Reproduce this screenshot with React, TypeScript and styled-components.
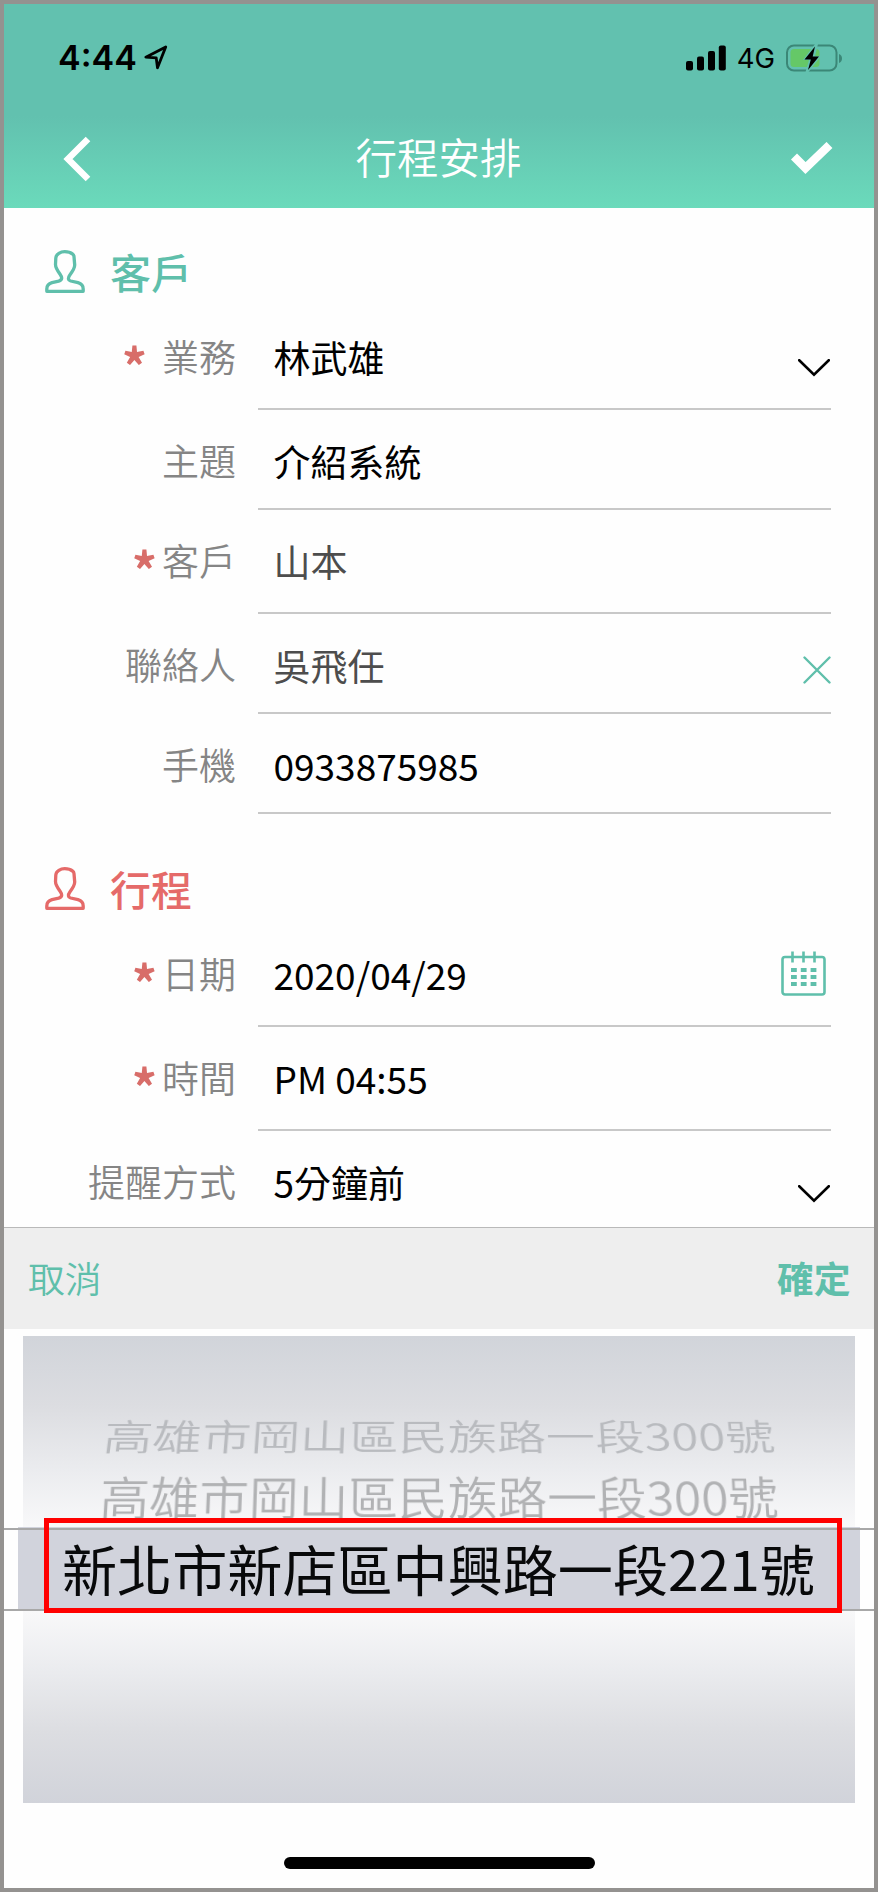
import React from "react";
import styled, { createGlobalStyle } from "styled-components";

const TEAL = "#5fbfab";
const CORAL = "#e56a69";

const GlobalStyle = createGlobalStyle`
  * { box-sizing: border-box; }
  body { margin: 0; background: #949290; }
`;

const Screen = styled.main`
  width: 878px;
  height: 1892px;
  border: 4px solid #949290;
  background: #fefefe;
  font-family: "Noto Sans CJK TC", sans-serif;
  font-size: 37px;
  line-height: 54px;
  color: #000;
  display: flex;
  flex-direction: column;
  overflow: hidden;
`;

const Header = styled.header`
  flex: none;
  height: 204px;
  background: linear-gradient(#62c1af 0, #62c1af 112px, #6bdabb 204px);
`;

const StatusBar = styled.div`
  height: 106px;
  padding: 1px 31px 0 54px;
  display: flex;
  align-items: center;
  font-family: Inter, sans-serif;
`;

const Clock = styled.span`
  font-size: 34px;
  font-weight: 600;
  margin-right: 7px;
`;

const Network = styled.span`
  font-size: 27.5px;
  margin: 0 11px 0 11px;
`;

const Spacer = styled.span`
  flex: 1;
`;

const TitleBar = styled.div`
  height: 98px;
  padding: 0 41px 0 59px;
  display: flex;
  align-items: center;
  justify-content: space-between;
`;

const Title = styled.h1`
  margin: 0 4px 7px 0;
  font-size: 41.5px;
  font-weight: 350;
  color: #fff;
`;

const Form = styled.div`
  flex: none;
  height: 1019px;
  overflow: hidden;
`;

const SectionTitle = styled.h2<{ $tone: string; $height: number }>`
  height: ${(p) => p.$height}px;
  margin: 0;
  padding: 0 0 12px 41px;
  display: flex;
  align-items: flex-end;
  gap: 25px;
  color: ${(p) => p.$tone};
  font-size: 41px;
  font-weight: 500;
  line-height: 46px;

  svg {
    margin-bottom: 1px;
  }
`;

const Row = styled.div<{ $height: number }>`
  height: ${(p) => p.$height}px;
  padding-right: 43px;
  display: flex;
`;

const Label = styled.div`
  width: 232px;
  margin-right: 22px;
  padding-top: 22.5px;
  display: flex;
  justify-content: flex-end;
  color: #858585;
  font-weight: 350;
`;

const Star = styled.span<{ $gap: number }>`
  margin-right: ${(p) => p.$gap}px;
  padding-top: 8px;
  font-size: 50px;
  font-weight: 700;
  color: #d86d69;
`;

const Field = styled.div<{ $muted?: boolean }>`
  flex: 1;
  padding: 24px 0 0 15.5px;
  border-bottom: 2px solid #c8c8c8;
  display: flex;
  justify-content: space-between;
  color: ${(p) => (p.$muted ? "#4d4d4d" : "#000")};
`;

const FieldIcon = styled.span<{ $top: number; $right: number }>`
  padding: ${(p) => p.$top}px ${(p) => p.$right}px 0 0;
  line-height: 0;
`;

const Sheet = styled.section`
  flex: none;
  height: 102px;
  padding: 0 23.5px 3px 24px;
  border-top: 1px solid #b9b9b9;
  background: #eee;
  display: flex;
  align-items: center;
  justify-content: space-between;
  color: ${TEAL};
`;

const SheetAction = styled.span<{ $strong?: boolean }>`
  font-size: 36.8px;
  font-weight: ${(p) => (p.$strong ? 700 : 350)};
`;

const Wheel = styled.section`
  position: relative;
  flex: none;
  height: 467px;
  margin-top: 7px;
`;

const WheelFace = styled.div`
  height: 467px;
  margin: 0 19px;
  padding-top: 72px;
  background: linear-gradient(#d1d4da 0, #dcdde1 70px, #ebecef 135px, #f8f8f9 190px, #f8f8f9 276px, #ebecef 332px, #dcdde1 397px, #d1d3da 467px);
  text-align: center;
  white-space: nowrap;
`;

const Option = styled.div<{ $angle: number; $height: number; $tone: string; $size: number }>`
  height: ${(p) => p.$height}px;
  line-height: ${(p) => p.$height}px;
  font-size: ${(p) => p.$size}px;
  font-weight: 350;
  color: ${(p) => p.$tone};
  transform: perspective(2400px) rotateX(${(p) => p.$angle}deg);
`;

const Band = styled.div`
  position: absolute;
  top: 191px;
  left: 0;
  right: 0;
  height: 84px;
  padding: 0 14px;
  display: flex;
`;

const BandFill = styled.div`
  flex: 1;
  background: #d1d3dc;
`;

const BandRules = styled.div`
  position: absolute;
  top: 192px;
  left: 0;
  right: 0;
  height: 83px;
  border: solid #a8a8a8;
  border-width: 2px 0;
`;

const Highlight = styled.div`
  position: absolute;
  top: 182px;
  left: 40px;
  width: 798px;
  height: 95px;
  border: 5px solid #f00;
  padding-left: 13px;
  line-height: 89px;
  font-size: 55.1px;
  white-space: nowrap;
  color: #08090a;
`;

const HomeArea = styled.footer`
  flex: 1;
  padding-top: 54px;
`;

const HomeBar = styled.div`
  width: 311px;
  height: 12px;
  margin: 0 auto;
  border-radius: 6px;
  background: #000;
`;

const LocationIcon = () => (
  <svg width="24" height="26" viewBox="0 0 24 26" fill="none">
    <path d="M1.8 12.2 21.7 2 13.5 22.7 12.2 12.8Z" stroke="#000" strokeWidth="2.8" strokeLinejoin="round" />
  </svg>
);

const SignalIcon = () => (
  <svg width="40" height="26" viewBox="0 0 40 26">
    <rect x="0" y="16" width="7" height="9.500" rx="2" />
    <rect x="11" y="11.500" width="7" height="14" rx="2" />
    <rect x="22" y="6" width="7" height="19.500" rx="2" />
    <rect x="32.800" y="0.500" width="7" height="25" rx="2" />
  </svg>
);

const BatteryIcon = () => (
  <svg width="57" height="28" viewBox="0 0 57 28">
    <rect x="1" y="1.500" width="49.500" height="25" rx="7" fill="none" stroke="#3b8777" strokeWidth="2" />
    <path d="M53 10c4 1 4 8 0 9z" fill="#3b8777" />
    <rect x="4.500" y="5" width="29" height="18" rx="3.500" fill="#65c867" />
    <path d="M29 0 17 16h6l-3.500 12h3L35 12h-6l3-12z" fill="#62c1af" />
    <path d="M29 2.500 18.500 15.500h6.300L22 26 33 12.500h-6.300z" fill="#000" />
  </svg>
);

const BackIcon = () => (
  <svg width="28" height="46" viewBox="0 0 28 46" fill="none">
    <path d="M25 3 5 23l20 20" stroke="#fff" strokeWidth="6.500" />
  </svg>
);

const DoneIcon = () => (
  <svg width="43" height="35" viewBox="0 0 43 35" fill="none">
    <path d="M4 14.500 15.500 26 39.500 3" stroke="#fff" strokeWidth="8.500" />
  </svg>
);

const PersonIcon = () => (
  <svg width="40" height="43" viewBox="0 0 40 43" fill="none" stroke="currentColor" strokeWidth="3.300" strokeLinejoin="round">
    <path d="M19.700 1.700c4 0 6 .8 8 2.400.8.600 1.200 1.500 1.300 2.500l.7 8.400c0 3.500-1.900 6-4.700 9.700-1.300 1.700-1.700 2.500-1.500 4.300.1 1.300.8 1.500 2.300 2l7.200 1.700c4 1.200 5.200 3.200 5.200 6.200v2.400H1.800v-2.400c0-3 1.200-5 5.200-6.200l6.700-1.500c2-.6 2.900-1.200 3-3 .1-1.600-.6-2.500-1.800-4.200-2.500-3.400-4.400-6-4.400-9.500L10.800 8c.3-4 4.900-6.300 8.900-6.300z" />
  </svg>
);

const ChevronIcon = () => (
  <svg width="32" height="18" viewBox="0 0 32 18" fill="none">
    <path d="m1.200 1.200 14.800 14.500L30.800 1.200" stroke="#000" strokeWidth="2.600" strokeLinecap="round" />
  </svg>
);

const ClearIcon = () => (
  <svg width="28" height="28" viewBox="0 0 28 28" fill="none">
    <path d="m1.500 1.500 25 25m0-25-25 25" stroke={TEAL} strokeWidth="2.400" strokeLinecap="round" />
  </svg>
);

const CalendarIcon = () => (
  <svg width="45" height="45" viewBox="0 0 45 45" fill="none" stroke={TEAL}>
    <rect x="1.500" y="6" width="42" height="37.500" rx="2.500" strokeWidth="2.600" />
    <path d="M11.500 0.500v11M22.500 0.500v11M33.500 0.500v11" strokeWidth="2.600" />
    <path d="M10 19h25.500M10 26h25.500M10 33h25.500" strokeWidth="4.200" strokeDasharray="5.800 4" />
  </svg>
);

type RowData = {
  label: string;
  value: string;
  height: number;
  starGap?: number;
  muted?: boolean;
  icon?: React.ReactNode;
  iconTop?: number;
  iconRight?: number;
};

const customerRows: RowData[] = [
  { label: "業務", value: "林武雄", height: 104, starGap: 15, icon: <ChevronIcon />, iconTop: 29, iconRight: 1 },
  { label: "主題", value: "介紹系統", height: 100 },
  { label: "客戶", value: "山本", height: 104, starGap: 5, muted: true },
  { label: "聯絡人", value: "吳飛任", height: 100, muted: true, icon: <ClearIcon />, iconTop: 18, iconRight: 0 },
  { label: "手機", value: "0933875985", height: 100 },
];

const tripRows: RowData[] = [
  { label: "日期", value: "2020/04/29", height: 104, starGap: 5, icon: <CalendarIcon />, iconTop: 4, iconRight: 5 },
  { label: "時間", value: "PM 04:55", height: 104, starGap: 5 },
  { label: "提醒方式", value: "5分鐘前", height: 104, icon: <ChevronIcon />, iconTop: 30, iconRight: 1 },
];

const FormRow = ({ label, value, height, starGap, muted, icon, iconTop = 0, iconRight = 0 }: RowData) => (
  <Row $height={height}>
    <Label>
      {starGap !== undefined && <Star $gap={starGap}>*</Star>}
      <span>{label}</span>
    </Label>
    <Field $muted={muted}>
      <span>{value}</span>
      {icon && <FieldIcon $top={iconTop} $right={iconRight}>{icon}</FieldIcon>}
    </Field>
  </Row>
);

export default function App() {
  return (
    <>
      <GlobalStyle />
      <Screen>
        <Header>
          <StatusBar>
            <Clock>4:44</Clock>
            <LocationIcon />
            <Spacer />
            <SignalIcon />
            <Network>4G</Network>
            <BatteryIcon />
          </StatusBar>
          <TitleBar>
            <BackIcon />
            <Title>行程安排</Title>
            <DoneIcon />
          </TitleBar>
        </Header>
        <Form>
          <SectionTitle $tone={TEAL} $height={98}>
            <PersonIcon />
            客戶
          </SectionTitle>
          {customerRows.map((row) => <FormRow key={row.label} {...row} />)}
          <SectionTitle $tone={CORAL} $height={109}>
            <PersonIcon />
            行程
          </SectionTitle>
          {tripRows.map((row) => <FormRow key={row.label} {...row} />)}
        </Form>
        <Sheet>
          <SheetAction>取消</SheetAction>
          <SheetAction $strong>確定</SheetAction>
        </Sheet>
        <Wheel>
          <WheelFace>
            <Option $angle={43} $height={53} $tone="#b9bbbf" $size={49.1}>高雄市岡山區民族路一段300號</Option>
            <Option $angle={24} $height={68} $tone="#b1b2b4" $size={49.7}>高雄市岡山區民族路一段300號</Option>
          </WheelFace>
          <Band><BandFill /></Band>
          <BandRules />
          <Highlight>新北市新店區中興路一段221號</Highlight>
        </Wheel>
        <HomeArea>
          <HomeBar />
        </HomeArea>
      </Screen>
    </>
  );
}
